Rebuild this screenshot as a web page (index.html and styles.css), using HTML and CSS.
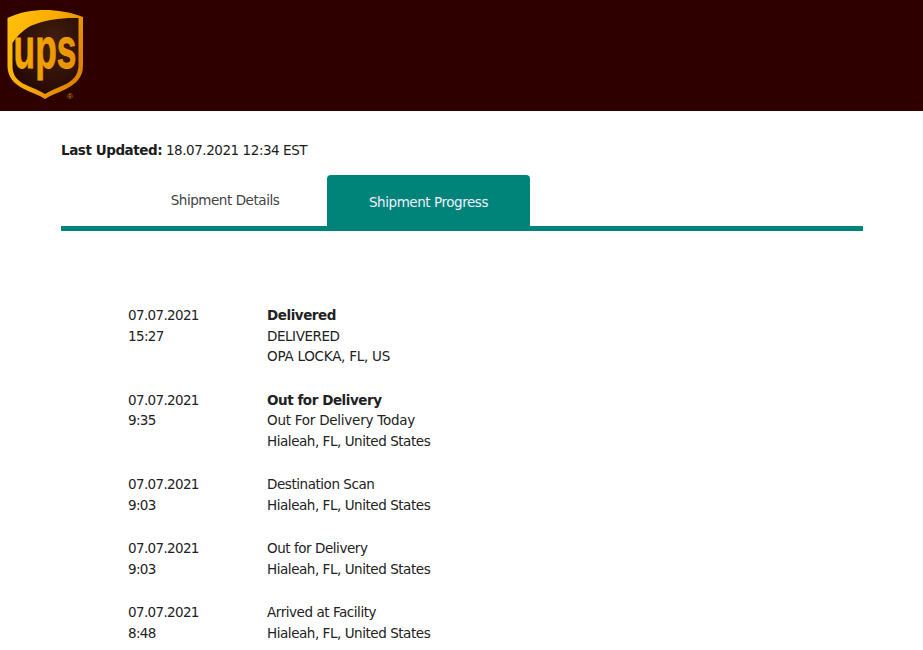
FILE: index.html
```html
<!DOCTYPE html>
<html lang="en">
<head>
<meta charset="utf-8">
<title>Shipment Progress</title>
<link rel="stylesheet" href="styles.css">
</head>
<body>
<header class="header">
  <svg class="logo" width="90" height="105" viewBox="0 0 90 105">
    <defs>
      <linearGradient id="gold" x1="0" y1="0" x2="1" y2="0.5">
        <stop offset="0" stop-color="#ffc20e"/>
        <stop offset="0.55" stop-color="#f9ab00"/>
        <stop offset="1" stop-color="#dd8400"/>
      </linearGradient>
      <linearGradient id="letters" x1="0" y1="0" x2="1" y2="0.3">
        <stop offset="0" stop-color="#f9b000"/>
        <stop offset="1" stop-color="#e89400"/>
      </linearGradient>
      <radialGradient id="shade" cx="0.62" cy="0.35" r="0.7">
        <stop offset="0" stop-color="#44200f"/>
        <stop offset="1" stop-color="#250804"/>
      </radialGradient>
    </defs>
    <path fill="url(#gold)" d="M7.500 18 C20 12 33 10 45 10 C57 10 70 12 83 17 L83 66 C83 77 76 84 66 89 C58 93 51 95 45 99 C39 95 32 93 24 89 C14 84 7.500 77 7.500 66 Z"/>
    <path fill="url(#shade)" d="M12.500 43 C18 35 25 28 33 25 C45 20 62 17.500 78.500 18 L78.500 65 C78.500 75 73 81 64 85 C57 88.500 51 90 45 94 C39 90 33 88.500 26 85 C17 81 12.500 75 12.500 66 Z"/>
    <text class="logo-text" transform="translate(45 68) scale(0.62 1)" text-anchor="middle">ups</text>
    <text class="logo-mark" x="70" y="98.500" text-anchor="middle">®</text>
  </svg>
</header>
<main class="content">
  <p class="updated"><strong>Last Updated:</strong> 18.07.2021 12:34 EST</p>
  <nav class="tabs">
    <a class="tab">Shipment Details</a>
    <a class="tab tab-active">Shipment Progress</a>
  </nav>
  <section class="events">
    <div class="event">
      <div class="when">07.07.2021<br>15:27</div>
      <div class="what"><strong>Delivered</strong><br>DELIVERED<br><span class="wide">OPA LOCKA, FL, US</span></div>
    </div>
    <div class="event">
      <div class="when">07.07.2021<br>9:35</div>
      <div class="what"><strong>Out for Delivery</strong><br><span class="wide">Out For Delivery Today</span><br>Hialeah, FL, United States</div>
    </div>
    <div class="event">
      <div class="when">07.07.2021<br>9:03</div>
      <div class="what">Destination Scan<br>Hialeah, FL, United States</div>
    </div>
    <div class="event">
      <div class="when">07.07.2021<br>9:03</div>
      <div class="what">Out for Delivery<br>Hialeah, FL, United States</div>
    </div>
    <div class="event">
      <div class="when">07.07.2021<br>8:48</div>
      <div class="what">Arrived at Facility<br>Hialeah, FL, United States</div>
    </div>
  </section>
</main>
</body>
</html>
```
FILE: styles.css
```css
html, body {
  margin: 0;
  height: 650px;
  overflow: hidden;
  background: #fff;
}
body {
  font-family: "DejaVu Sans", sans-serif;
  font-size: 13.5px;
  letter-spacing: -0.45px;
  color: #222;
}
.header {
  height: 111px;
  background: #2e0100;
}
.logo {
  display: block;
}
.logo-text {
  font-family: "Liberation Sans", sans-serif;
  font-weight: 700;
  font-size: 57px;
  letter-spacing: 0;
  fill: url(#letters);
  stroke: #f4a400;
  stroke-width: 0.8px;
}
.logo-mark {
  font-family: "Liberation Sans", sans-serif;
  font-size: 8px;
  letter-spacing: 0;
  fill: #c98a10;
}
.content {
  padding: 29px 60px 0 61px;
}
.updated {
  margin: 0;
  line-height: 20px;
  color: #1c1c1c;
}
.updated strong {
  letter-spacing: -0.45px;
}
.tabs {
  display: flex;
  margin-top: 15px;
  height: 51px;
  border-bottom: 5px solid #00847a;
  padding-left: 62px;
}
.tab {
  width: 204px;
  text-align: center;
  line-height: 51px;
  color: #444;
}
.tab-active {
  width: 203px;
  background: #00847a;
  color: #eef;
  border-radius: 4px 4px 0 0;
  line-height: 54px;
}
.events {
  margin-top: 74.2px;
  padding-left: 67px;
}
.event {
  display: flex;
  line-height: 20.5px;
  margin-bottom: 23px;
}
.when {
  width: 139px;
  letter-spacing: -0.65px;
}
.wide {
  letter-spacing: -0.25px;
}
```
